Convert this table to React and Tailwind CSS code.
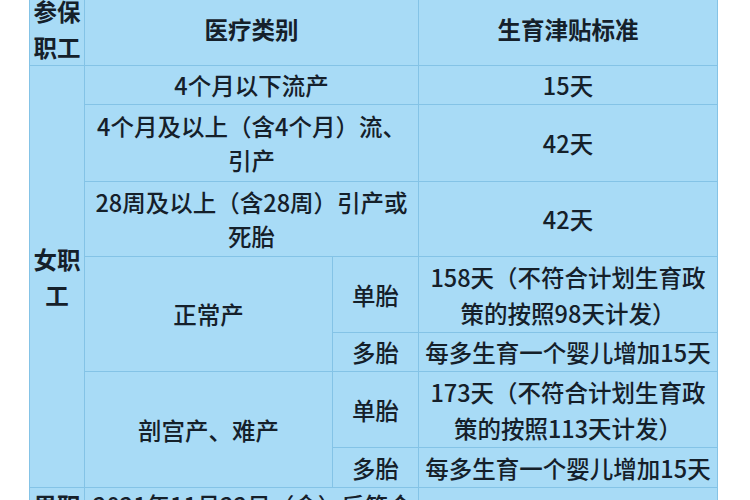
const cell = "border border-[#84c3e6] text-center align-middle p-0";
const bold = { fontFamily: '"Noto Sans CJK SC", "Noto Sans", sans-serif' };

function Row({ h, children }) {
  return <tr style={{ height: h }}>{children}</tr>;
}

export default function App() {
  return (
    <div className="h-[500px] overflow-hidden bg-white pl-[29px]">
      <table
        className="-mt-[9px] w-[688px] table-fixed border-collapse bg-[#a8dbf6] text-[23.5px] leading-[36px] text-[#15202a]"
        style={{ fontFamily: '"Noto Sans CJK SC Medium", "Noto Sans CJK SC", "Noto Sans", sans-serif' }}
      >
        <colgroup>
          <col className="w-[55px]" />
          <col className="w-[248px]" />
          <col className="w-[86px]" />
          <col className="w-[299px]" />
        </colgroup>
        <tbody className="font-medium">
          <Row h={74}>
            <td className={`${cell} font-bold`} style={bold}>
              参保
              <br />
              职工
            </td>
            <td colSpan={2} className={`${cell} font-bold`} style={bold}>
              医疗类别
            </td>
            <td className={`${cell} font-bold`} style={bold}>
              生育津贴标准
            </td>
          </Row>
          <Row h={39}>
            <td rowSpan={7} className={`${cell} font-bold`} style={bold}>
              女职
              <br />工
            </td>
            <td colSpan={2} className={cell}>
              4个月以下流产
            </td>
            <td className={cell}>15天</td>
          </Row>
          <Row h={77}>
            <td colSpan={2} className={`${cell} leading-[34px]`}>
              4个月及以上（含4个月）流、
              <br />
              引产
            </td>
            <td className={cell}>42天</td>
          </Row>
          <Row h={75}>
            <td colSpan={2} className={`${cell} leading-[34px]`}>
              28周及以上（含28周）引产或
              <br />
              死胎
            </td>
            <td className={cell}>42天</td>
          </Row>
          <Row h={76}>
            <td rowSpan={2} className={cell}>
              正常产
            </td>
            <td className={cell}>单胎</td>
            <td className={cell}>
              158天（不符合计划生育政
              <br />
              策的按照98天计发）
            </td>
          </Row>
          <Row h={39}>
            <td className={cell}>多胎</td>
            <td className={`${cell} whitespace-nowrap`}>每多生育一个婴儿增加15天</td>
          </Row>
          <Row h={76}>
            <td rowSpan={2} className={cell}>
              剖宫产、难产
            </td>
            <td className={cell}>单胎</td>
            <td className={cell}>
              173天（不符合计划生育政
              <br />
              策的按照113天计发）
            </td>
          </Row>
          <Row h={40}>
            <td className={cell}>多胎</td>
            <td className={`${cell} whitespace-nowrap`}>每多生育一个婴儿增加15天</td>
          </Row>
          <Row h={110}>
            <td className={`${cell} align-top pt-[2px] font-bold leading-[30px]`} style={bold}>
              男职
              <br />工
            </td>
            <td
              colSpan={2}
              className={`${cell} align-top overflow-hidden whitespace-nowrap pt-[2px] px-[8px] text-left leading-[30px]`}
            >
              2021年11月22日（含）后符合
              <br />
              国家生育政策生育子女的，
              <br />
              配偶享受护理假
            </td>
            <td className={cell}>15天</td>
          </Row>
        </tbody>
      </table>
    </div>
  );
}
